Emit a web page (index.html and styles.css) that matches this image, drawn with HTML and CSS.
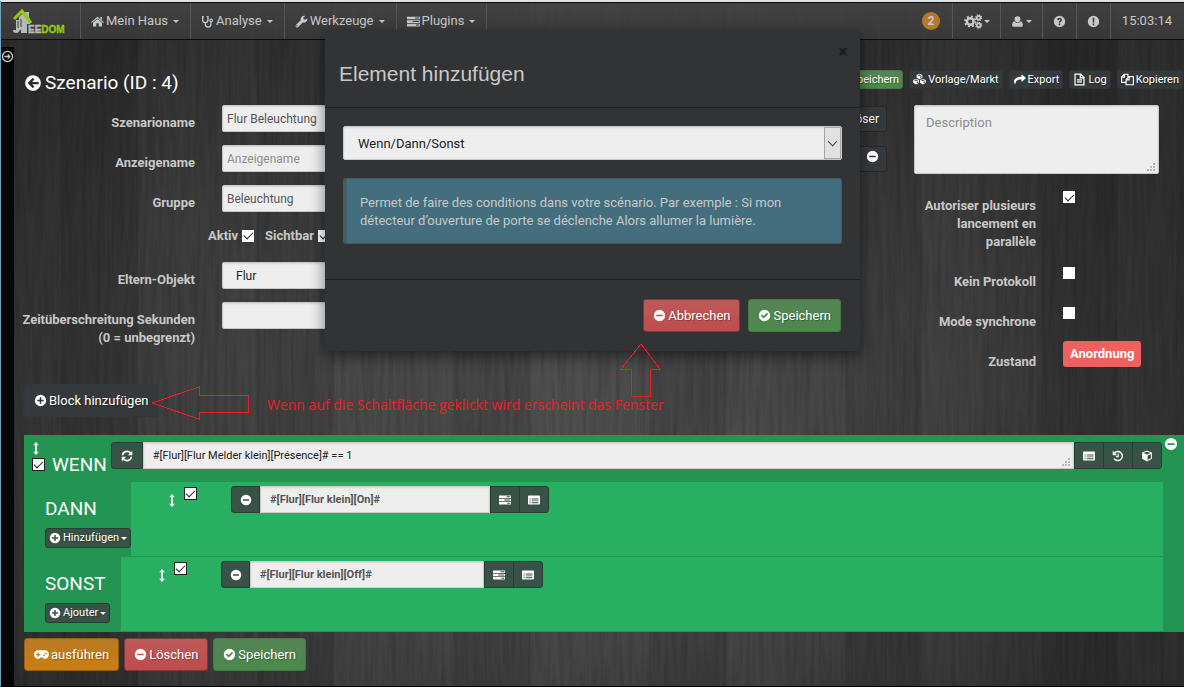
FILE: index.html
```html
<!DOCTYPE html>
<html lang="de">
<head>
<meta charset="utf-8">
<title>Szenario – Jeedom</title>
<link rel="stylesheet" href="styles.css">
</head>
<body>
<svg class="defs" width="0" height="0" aria-hidden="true">
  <symbol id="plus" viewBox="0 0 16 16"><path fill-rule="evenodd" d="M8 1a7 7 0 100 14A7 7 0 008 1zM7 4h2v3h3v2H9v3H7V9H4V7h3z"/></symbol>
  <symbol id="minus" viewBox="0 0 16 16"><path fill-rule="evenodd" d="M8 1a7 7 0 100 14A7 7 0 008 1zM4 7h8v2H4z"/></symbol>
  <symbol id="check" viewBox="0 0 16 16"><path fill-rule="evenodd" d="M8 1a7 7 0 100 14A7 7 0 008 1zM3.500 8.200L5 6.700l2 2 4-4 1.500 1.500L7 11.700z"/></symbol>
  <symbol id="back" viewBox="0 0 16 16"><path fill-rule="evenodd" d="M8 1a7 7 0 100 14A7 7 0 008 1zM3.200 8l4.600-4.600 1.400 1.400L7.200 7H13v2H7.200l2 2.200-1.400 1.400z"/></symbol>
  <symbol id="forward" viewBox="0 0 16 16"><circle cx="8" cy="8" r="6.200" fill="none" stroke="currentColor" stroke-width="1.600"/><path d="M8.300 4.300L12 8l-3.700 3.700V9H4V7h4.300z"/></symbol>
  <symbol id="home" viewBox="0 0 16 16"><path d="M8 2l8 6.800-.9 1L8 3.900.9 9.800 0 8.800zM11.500 2.500h2v3.600l-2-1.700zM8 5l5.500 4.600V14h-4v-4h-3v4h-4V9.600z"/></symbol>
  <symbol id="steth" viewBox="0 0 16 16"><path fill="none" stroke="currentColor" stroke-width="1.600" d="M3.500 2H2v4a3.300 3.300 0 006.600 0V2H7M5.300 9.500v2a3.400 3.400 0 006.900 0V8"/><circle cx="12.500" cy="6.500" r="1.600" fill="none" stroke="currentColor" stroke-width="1.400"/></symbol>
  <symbol id="wrench" viewBox="0 0 16 16"><path fill-rule="evenodd" d="M15.300 4.300a4.400 4.400 0 01-5.800 4.800L3.700 15c-1.400 1.300-3.900-1-2.600-2.600l6-5.800A4.400 4.400 0 0113 1.200l-2.700 2 .2 2 2 .7zM2.700 12.600a.8.8 0 100 1.500.8.8 0 000-1.500z"/></symbol>
  <symbol id="tasks" viewBox="0 0 16 16"><path fill-rule="evenodd" d="M0 2h16v3.300H0zM10 3h5v1.200h-5zM0 6.400h16v3.300H0zM7 7.400h8v1.200H7zM0 10.800h16V14H0zM11 11.800h4V13h-4z"/></symbol>
  <symbol id="list" viewBox="0 0 16 16"><path fill-rule="evenodd" d="M1 2h14q1 0 1 1v10q0 1-1 1H1q-1 0-1-1V3q0-1 1-1zM2 6h1.500v1.300H2zM5 6h9v1.300H5zM2 8.500h1.500v1.300H2zM5 8.500h9v1.300H5zM2 11h1.500v1.300H2zM5 11h9v1.300H5z"/></symbol>
  <symbol id="cogs" viewBox="0 0 20 16"><circle cx="6.500" cy="8" r="3.500" fill="none" stroke="currentColor" stroke-width="2.600"/><circle cx="6.500" cy="8" r="5.500" fill="none" stroke="currentColor" stroke-width="2" stroke-dasharray="2.100 2.220"/><circle cx="15.500" cy="4" r="2" fill="none" stroke="currentColor" stroke-width="1.800"/><circle cx="15.500" cy="4" r="3.200" fill="none" stroke="currentColor" stroke-width="1.200" stroke-dasharray="1.300 1.210"/><circle cx="15.500" cy="12" r="2" fill="none" stroke="currentColor" stroke-width="1.800"/><circle cx="15.500" cy="12" r="3.200" fill="none" stroke="currentColor" stroke-width="1.200" stroke-dasharray="1.300 1.210"/></symbol>
  <symbol id="user" viewBox="0 0 16 16"><path d="M8 1.500a3.600 3.600 0 013.600 3.700C11.600 7.500 10 9.200 8 9.200S4.400 7.500 4.400 5.200A3.600 3.600 0 018 1.500zM4.300 7.700C5.500 10.700 10.500 10.700 11.700 7.700c2.300.5 2.900 3 2.900 5 0 1.300-.8 1.800-1.800 1.800H3.200c-1 0-1.800-.5-1.800-1.800 0-2 .6-4.500 2.900-5z"/></symbol>
  <symbol id="question" viewBox="0 0 16 16"><path fill-rule="evenodd" d="M8 1a7 7 0 100 14A7 7 0 008 1zM7 10.500h2v2H7zM5 6C5.200 2.600 11 2.600 11 6c0 1.900-2 1.900-2 3.500H7C7 7.200 9 7.300 9 6c0-1-1.700-1-2 .5z"/></symbol>
  <symbol id="bang" viewBox="0 0 16 16"><path fill-rule="evenodd" d="M8 1a7 7 0 100 14A7 7 0 008 1zM6.900 3.500h2.200L8.900 9.300H7.100zM7 10.500h2v2H7z"/></symbol>
  <symbol id="cubes" viewBox="0 0 18 16"><path fill-rule="evenodd" d="M9 0l4 1.600v4L9 7.500 5 5.600v-4zM6.200 2L9 3.100 11.800 2 9 1zM9.800 4.200V6l2.200-1V3.300zM4.300 7l4 1.600v4L4.300 15l-4-2.400v-4zM1.500 9l2.800 1.200L7.100 9 4.300 8zM5 11.300v2l2.300-1.200v-1.800zM13.700 7l4 1.600v4l-4 2.400-4-2.400v-4zM10.900 9l2.800 1.200L16.500 9l-2.800-1zM14.500 11.300v2l2.200-1.200v-1.800z"/></symbol>
  <symbol id="cube" viewBox="0 0 16 16"><path fill-rule="evenodd" d="M8 .8l6.500 2.600v8.400L8 15.200l-6.500-3.400V3.400zM3.300 4L8 5.900 12.700 4 8 2.200zM8.800 7.300v6l4.400-2.300V5.500z"/></symbol>
  <symbol id="share" viewBox="0 0 16 16"><path d="M16 6.300L10.500 11V8C6 7.800 3.200 9 2.800 14 .2 11 -.2 4.800 10.500 4.600v-3z"/></symbol>
  <symbol id="file" viewBox="0 0 16 16"><path fill="none" stroke="currentColor" stroke-width="1.500" d="M2.500 1.500h7l4 4v9h-11zM9 1.500V6h4.500M5 8.500h6M5 11h6"/></symbol>
  <symbol id="copy" viewBox="0 0 16 16"><path fill="none" stroke="currentColor" stroke-width="1.400" d="M6 11.500H.8V5L4 1.500h4.500v3M4.300 1.500V5H.8M6.300 8.200L9.500 4.500h5.700v10H6.300zM10 4.500v4H6.300"/></symbol>
  <symbol id="refresh" viewBox="0 0 16 16"><path fill="none" stroke="currentColor" stroke-width="2.200" d="M2 7a6 6 0 0110.500-3M14 9a6 6 0 01-10.500 3"/><path d="M15 1v6H9zM1 15V9h6z"/></symbol>
  <symbol id="history" viewBox="0 0 16 16"><path fill="none" stroke="currentColor" stroke-width="2" d="M3 4.500A6 6 0 112.800 11.500"/><path d="M1 1v6h6zM7.500 4.500H9v5H5.500V8h2z"/></symbol>
  <symbol id="updown" viewBox="0 0 8 16"><path d="M4 0l3.500 4H5v8h2.500L4 16 .5 12H3V4H.5z"/></symbol>
  <symbol id="gamepad" viewBox="0 0 18 14"><path fill-rule="evenodd" d="M5 2h8a5 5 0 010 10c-1.700 0-2.700-.9-3.200-1.800H8.200C7.700 11.100 6.700 12 5 12A5 5 0 015 2zM4.300 4.500v1.800H2.500v1.500h1.800v1.800h1.500V7.800h1.800V6.300H5.800V4.500zM12 7a1.100 1.100 0 100 2.200A1.100 1.100 0 0012 7zM14.300 4.600a1.100 1.100 0 100 2.200 1.100 1.100 0 000-2.200z"/></symbol>
  <symbol id="grip" viewBox="0 0 9 9"><path d="M6 0h2v2H6zM3 3h2v2H3zM6 3h2v2H6zM0 6h2v2H0zM3 6h2v2H3zM6 6h2v2H6z"/></symbol>
</svg>

<svg class="wood" aria-hidden="true">
  <filter id="grain" x="0" y="0" width="100%" height="100%">
    <feTurbulence type="fractalNoise" baseFrequency="0.22 0.012" numOctaves="4" seed="8"/>
    <feColorMatrix values="0 0 0 0 0  0 0 0 0 0  0 0 0 0 0  1.4 0 0 0 -0.5"/>
  </filter>
  <rect width="100%" height="100%" filter="url(#grain)"/>
</svg>

<nav class="navbar">
  <a class="brand" href="#" aria-label="Jeedom">
    <svg width="56" height="28" viewBox="0 0 56 28"><path fill="#b9b9b9" d="M13 3h3v5l1 2v5h-3v9H8v-3H6V8l4-4zM3 11h4v8q0 5-4 5-3 0-3-3h3z"/><path fill="none" stroke="#3a3a3a" stroke-width="1" d="M5 12v7M8 10v8"/><path fill="none" stroke="#93c90f" stroke-width="3" d="M1 10l8-8 9 12"/><text x="15" y="24" font-family="Liberation Sans, sans-serif" font-size="10" font-weight="700" fill="#b9b9b9" stroke="#b9b9b9" stroke-width=".4">EE<tspan fill="#93c90f" stroke="#93c90f">DOM</tspan></text></svg>
  </a>
  <a class="item" href="#"><svg class="i"><use href="#home"/></svg>Mein Haus<b class="caret"></b></a>
  <a class="item" href="#"><svg class="i"><use href="#steth"/></svg>Analyse<b class="caret"></b></a>
  <a class="item" href="#"><svg class="i"><use href="#wrench"/></svg>Werkzeuge<b class="caret"></b></a>
  <a class="item" href="#"><svg class="i"><use href="#tasks"/></svg>Plugins<b class="caret"></b></a>
  <span class="spacer"></span>
  <a class="item count" href="#"><span>2</span></a>
  <a class="item" href="#" aria-label="Einstellungen"><svg class="i wide"><use href="#cogs"/></svg><b class="caret tight"></b></a>
  <a class="item" href="#" aria-label="Benutzer"><svg class="i"><use href="#user"/></svg><b class="caret tight"></b></a>
  <a class="item" href="#" aria-label="Hilfe"><svg class="i only"><use href="#question"/></svg></a>
  <a class="item" href="#" aria-label="Info"><svg class="i only"><use href="#bang"/></svg></a>
  <span class="item clock">15:03:14</span>
</nav>

<div class="page">
  <aside class="rail"><svg class="i"><use href="#forward"/></svg></aside>
  <main class="main">
    <header class="head">
      <h1><svg class="i big"><use href="#back"/></svg>Szenario (ID : 4)</h1>
      <div class="tools">
        <button class="xs success"><svg class="i"><use href="#check"/></svg>Speichern</button>
        <button class="xs"><svg class="i"><use href="#cubes"/></svg>Vorlage/Markt</button>
        <button class="xs"><svg class="i"><use href="#share"/></svg>Export</button>
        <button class="xs"><svg class="i"><use href="#file"/></svg>Log</button>
        <button class="xs"><svg class="i"><use href="#copy"/></svg>Kopieren</button>
      </div>
    </header>

    <form class="form">
      <div class="col">
        <div class="row"><label for="sn">Szenarioname</label><input class="ctl" id="sn" value="Flur Beleuchtung"></div>
        <div class="row"><label for="an">Anzeigename</label><input class="ctl" id="an" placeholder="Anzeigename"></div>
        <div class="row"><label for="gr">Gruppe</label><input class="ctl" id="gr" value="Beleuchtung"></div>
        <div class="row checks"><label>Aktiv<input type="checkbox" checked></label><label>Sichtbar<input type="checkbox" checked></label></div>
        <div class="row"><label for="eo">Eltern-Objekt</label><select class="ctl" id="eo"><option>Flur</option></select></div>
        <div class="row"><label for="zs" class="long">Zeitüberschreitung Sekunden<br>(0 = unbegrenzt)</label><input class="ctl" id="zs"></div>
      </div>
      <div class="col mid">
        <button type="button" class="sm">+ Auslöser</button>
        <button type="button" class="sm" aria-label="Entfernen"><svg class="i"><use href="#minus"/></svg></button>
      </div>
      <div class="col">
        <div class="area"><textarea class="ctl tall" placeholder="Description" aria-label="Description"></textarea><svg class="grip"><use href="#grip"/></svg></div>
        <div class="row opt"><label for="c1">Autoriser plusieurs lancement en parallèle</label><input type="checkbox" id="c1" checked></div>
        <div class="row opt"><label for="c2">Kein Protokoll</label><input type="checkbox" id="c2"></div>
        <div class="row opt"><label for="c3">Mode synchrone</label><input type="checkbox" id="c3"></div>
        <div class="row opt"><span class="lbl">Zustand</span><span class="state">Anordnung</span></div>
      </div>
    </form>

    <button class="btn add"><svg class="i"><use href="#plus"/></svg>Block hinzufügen</button>

    <section class="block">
      <div class="if">
        <div class="handle"><svg class="ud"><use href="#updown"/></svg><input type="checkbox" class="lined" checked aria-label="Wenn aktiv"></div>
        <h2>WENN</h2>
        <div class="group">
          <button class="add-on" aria-label="Aktualisieren"><svg class="i"><use href="#refresh"/></svg></button>
          <div class="area"><textarea class="ctl expr" rows="1" aria-label="Bedingung">#[Flur][Flur Melder klein][Présence]# == 1</textarea><svg class="grip"><use href="#grip"/></svg></div>
          <button class="add-on" aria-label="Befehl"><svg class="i"><use href="#list"/></svg></button>
          <button class="add-on" aria-label="Verlauf"><svg class="i"><use href="#history"/></svg></button>
          <button class="add-on" aria-label="Objekt"><svg class="i"><use href="#cube"/></svg></button>
        </div>
        <button class="remove" aria-label="Block entfernen"><svg class="i"><use href="#minus"/></svg></button>
      </div>
      <div class="branch">
        <div class="side"><h2>DANN</h2><button class="xs"><svg class="i"><use href="#plus"/></svg>Hinzufügen<b class="caret"></b></button></div>
        <div class="body">
          <svg class="ud"><use href="#updown"/></svg><input type="checkbox" class="lined" checked aria-label="Aktion aktiv">
          <div class="group">
            <button class="add-on" aria-label="Entfernen"><svg class="i"><use href="#minus"/></svg></button>
            <input class="ctl cmd" value="#[Flur][Flur klein][On]#" aria-label="Befehl">
            <button class="add-on" aria-label="Aktion"><svg class="i"><use href="#tasks"/></svg></button>
            <button class="add-on" aria-label="Liste"><svg class="i"><use href="#list"/></svg></button>
          </div>
        </div>
      </div>
      <div class="branch">
        <div class="side"><h2>SONST</h2><button class="xs"><svg class="i"><use href="#plus"/></svg>Ajouter<b class="caret"></b></button></div>
        <div class="body">
          <svg class="ud"><use href="#updown"/></svg><input type="checkbox" class="lined" checked aria-label="Aktion aktiv">
          <div class="group">
            <button class="add-on" aria-label="Entfernen"><svg class="i"><use href="#minus"/></svg></button>
            <input class="ctl cmd" value="#[Flur][Flur klein][Off]#" aria-label="Befehl">
            <button class="add-on" aria-label="Aktion"><svg class="i"><use href="#tasks"/></svg></button>
            <button class="add-on" aria-label="Liste"><svg class="i"><use href="#list"/></svg></button>
          </div>
        </div>
      </div>
    </section>

    <div class="actions">
      <button class="btn warn"><svg class="i pad"><use href="#gamepad"/></svg>ausführen</button>
      <button class="btn danger"><svg class="i"><use href="#minus"/></svg>Löschen</button>
      <button class="btn success"><svg class="i"><use href="#check"/></svg>Speichern</button>
    </div>
  </main>
</div>

<div class="modal" role="dialog" aria-labelledby="mt">
  <div class="modal-head"><h3 id="mt">Element hinzufügen</h3><button class="close" aria-label="Schließen">×</button></div>
  <div class="modal-body">
    <div class="pick"><select class="ctl" aria-label="Element"><option>Wenn/Dann/Sonst</option></select><span class="drop"></span></div>
    <p class="info">Permet de faire des conditions dans votre scénario. Par exemple : Si mon détecteur d’ouverture de porte se déclenche Alors allumer la lumière.</p>
  </div>
  <div class="modal-foot">
    <button class="btn danger"><svg class="i"><use href="#minus"/></svg>Abbrechen</button>
    <button class="btn success"><svg class="i"><use href="#check"/></svg>Speichern</button>
  </div>
</div>

<svg class="note-arrow left" viewBox="0 0 99 34"><path d="M1 17L48 1v8h49v17H48v7z"/></svg>
<svg class="note-arrow up" viewBox="0 0 42 54"><path d="M21 1l19 25H30v27H11V26H1z"/></svg>
<p class="note">Wenn auf die Schaltfläche geklickt wird erscheint das Fenster</p>
</body>
</html>
```

FILE: styles.css
```css
* { box-sizing: border-box; }

body {
  margin: 0;
  min-height: 100vh;
  display: flex;
  flex-direction: column;
  position: relative;
  overflow: hidden;
  border-top: 2px solid #dfe3e6;
  border-left: 1px solid #6fa3bf;
  border-bottom: 1px solid #000;
  background:
    repeating-linear-gradient(90deg, rgba(255,255,255,.01) 0 61px, rgba(0,0,0,.05) 61px 138px, rgba(255,255,255,.02) 138px 196px),
    radial-gradient(ellipse 55% 75% at 48% 60%, #4c4c4c, #434343 45%, #2b2b2b);
  background-color: #2b2b2b;
  color: #c8c8c8;
  font: 13px/18px Roboto, sans-serif;
}

.defs { position: absolute; }
.wood { position: absolute; top: 0; left: 0; width: 100%; height: 100%; z-index: -1; opacity: .2; }

h1, h2, h3, p { margin: 0; font-weight: 400; }
button, input, select, textarea { font: inherit; color: inherit; margin: 0; }
button { cursor: pointer; }

.i { width: 13px; height: 13px; flex: none; fill: currentColor; }
.caret { border: 3px solid transparent; border-top-color: currentColor; border-bottom: 0; margin-left: 1px; }

/* Navigation */
.navbar {
  display: flex;
  height: 38px;
  border-top: 1px solid #0c0c0c;
  border-bottom: 1px solid #0c0c0c;
  background: linear-gradient(rgba(72,72,72,.75), rgba(60,60,60,.75));
  font-size: 13px;
}
.brand { width: 79px; padding: 6px 12px; }
.item {
  display: flex;
  align-items: center;
  padding: 0 10px;
  border-left: 1px solid #575757;
  color: #c8c8c8;
  text-decoration: none;
}
.item .i { margin-right: 2px; }
.item .wide { width: 21px; height: 15px; margin: 0; }
.item .only { margin: 0; }
.item .caret { margin: 0 1px 0 5px; }
.item .caret.tight { margin: 0; }
.spacer { flex: 1; border-left: 1px solid #575757; }
.count { border: 0; padding-right: 12px; }
.count span { min-width: 18px; border-radius: 9px; background: #b5792b; font-size: 12px; font-weight: 700; text-align: center; }
.clock { padding: 0 12px 0 11px; }

/* Page frame */
.page { display: flex; flex: 1; }
.rail { width: 13px; margin-top: 7px; padding-top: 3px; background: #060606; }
.rail .i { display: block; }
.main { flex: 1; min-width: 0; padding-left: 10px; }

.head { display: flex; align-items: center; justify-content: space-between; height: 65px; padding: 20px 1px 0 0; }
h1 { display: flex; align-items: center; gap: 3px; color: #fff; font-size: 19px; line-height: 24px; }
.i.big { width: 18px; height: 18px; }
.tools { display: flex; gap: 6px; align-self: flex-start; padding-top: 10px; }

/* Buttons */
button { border: 1px solid rgba(0,0,0,.3); border-radius: 3px; background: #36393b; color: #fff; text-shadow: 1px 1px 1px rgba(0,0,0,.3); }
.xs { display: flex; align-items: center; gap: 2px; height: 19px; padding: 0 3px; border-color: #313436; font-size: 11px; line-height: 16px; white-space: nowrap; }
.xs .caret { margin-left: 0; }
.side .xs .i { width: 12px; height: 12px; }
.btn { display: inline-flex; align-items: center; gap: 2px; height: 33px; padding: 0 9px; border-color: #343738; font-size: 13px; white-space: nowrap; }
.sm { height: 26px; padding: 0 7px; font-size: 12px; }
.success { background: linear-gradient(#558355, #4a8a4a); border-color: #427a42; }
.danger { background: linear-gradient(#bd5a5a, #bf4c4a); border-color: #7b3a39; }
.warn { background: linear-gradient(#b97926, #cb7d12); border-color: #94600f; }
.i.pad { width: 15px; }

/* Controls */
.ctl {
  width: 100%;
  height: 27px;
  padding: 0 4px;
  border: 1px solid #c9c9c9;
  border-radius: 2px;
  background: #eee;
  box-shadow: inset 0 1px 2px rgba(0,0,0,.1);
  color: #555;
  font-size: 12px;
  appearance: none;
}
.ctl::placeholder { color: #8d8d8d; opacity: 1; }
select.ctl { color: #222; padding-left: 13px; }
textarea.ctl { display: block; resize: none; overflow: hidden; }
.area { position: relative; }
.grip { position: absolute; right: 3px; bottom: 2px; width: 9px; height: 9px; fill: #b8b8b8; }

input[type=checkbox] {
  appearance: none;
  display: grid;
  place-items: center;
  flex: none;
  width: 12px;
  height: 12px;
  background: #fff;
}
input[type=checkbox]:checked::before {
  content: "";
  width: 8px;
  height: 4px;
  margin-top: -2px;
  border: solid #222;
  border-width: 0 0 1px 1px;
  transform: rotate(-45deg);
}
input.lined { width: 13px; height: 13px; border: 1px solid #222; }

/* Scenario settings */
.form { display: grid; grid-template-columns: 31% 1fr 270px; }
.col { min-width: 0; }
.row { display: grid; grid-template-columns: 171px 1fr; gap: 27px; margin-bottom: 13px; }
.row label, .lbl { padding-top: 9px; color: #c8c8c8; font-weight: 700; text-align: right; }
.row .long { justify-self: end; white-space: nowrap; }
.row.checks { display: flex; align-items: center; gap: 11px; padding-left: 184px; margin: 0 0 16px; height: 21px; }
.row.checks label { display: flex; align-items: center; gap: 4px; padding: 0; }
.mid { display: flex; flex-direction: column; align-items: flex-end; gap: 14px; padding: 1px 27px 0 0; }
.tall { height: 69px; padding: 8px 11px; font-size: 13px; }
.form .area { width: 245px; margin-bottom: 14px; }
.row.opt { grid-template-columns: 122px 1fr; margin-bottom: 13px; }
.row.opt input { margin-top: 3px; }
.opt .state { justify-self: start; align-self: start; margin-top: -3px; }
.state { padding: 4px 7px; border-radius: 3px; background: #f0605e; color: #fff; font-weight: 700; }
.add { display: flex; }

/* Condition block */
.block { margin-top: 18px; background: #249453; }
.if { position: relative; display: flex; height: 47px; padding: 7px 22px 0 8px; }
.handle { width: 20px; }
.ud { width: 8px; height: 13px; flex: none; fill: #fff; }
.handle .ud { display: block; }
.handle .lined { margin-top: 3px; }
h2 { color: #fff; font-size: 19px; line-height: 24px; }
.if h2 { padding: 11px 4px 0 0; }
.group { display: flex; flex: 1; align-items: flex-start; }
.group .area { flex: 1; }
.group .ctl { border-radius: 0; border-color: #ccc; }
.expr { padding: 4px 9px; color: #222; font-size: 11px; }
.cmd { min-width: 0; padding: 0 9px; font-size: 11px; font-weight: 700; }
.add-on { display: grid; place-items: center; width: 30px; height: 27px; flex: none; margin-right: -1px; padding: 0; border: 1px solid #273f33; border-radius: 0; background: #395247; }
.add-on:first-child { width: 29px; border-radius: 3px 0 0 3px; margin: 0; }
.if .add-on:first-child { width: 32px; }
.add-on:last-child { border-radius: 0 3px 3px 0; margin: 0; }
.add-on .i { width: 12px; height: 12px; }
.remove { position: absolute; top: 2px; right: 6px; padding: 0; border: 0; background: none; }
.remove .i { display: block; width: 14px; height: 14px; }
.branch { display: flex; height: 75px; padding-right: 21px; }
.side { min-width: 97px; padding: 15px 0 0 21px; }
.side .xs { margin-top: 7px; height: 20px; background: #395247; border-color: #273f33; }
.body { display: flex; flex: 1; padding: 4px 0 0 37px; background: #29af61; border-bottom: 1px solid #249453; }
.body .ud { margin-top: 8px; }
.body .lined { margin: 1px 34px 0 8px; }
.body .group { flex: 0 0 32%; }

.actions { display: flex; gap: 5px; padding-top: 6px; }

/* Dialog */
.modal {
  position: absolute;
  top: 28px;
  left: 0;
  right: 0;
  width: 535px;
  margin: 0 auto;
  border-radius: 5px;
  background: #313335;
  box-shadow: 0 5px 15px rgba(0,0,0,.5);
}
.modal-head { position: relative; padding: 32px 14px 21px; border-bottom: 1px solid #1d1e1f; }
h3 { font: 21px/24px "Liberation Sans", sans-serif; }
.close { position: absolute; top: 12px; right: 13px; padding: 0; border: 0; background: none; color: #17191a; font-size: 16px; line-height: 20px; }
.modal-body { padding: 18px 18px 35px; }
.pick { position: relative; }
.pick .ctl { height: 34px; padding: 2px 0 0 14px; font-size: 13px; }
.drop { position: absolute; top: 1px; right: 1px; bottom: 1px; width: 17px; border: 1px solid #a5a5a5; background: #e1e1e1; pointer-events: none; display: grid; place-items: center; }
.drop::before { content: ""; width: 6px; height: 6px; margin-top: -4px; border: solid #444; border-width: 0 1px 1px 0; transform: rotate(45deg); }
.info { margin-top: 18px; padding: 15px 13px 13px; border: 1px solid #3a5f66; border-left: 4px solid #3f5f62; border-radius: 3px; background: #446e7d; }
.modal-foot { display: flex; justify-content: flex-end; gap: 8px; padding: 19px; border-top: 1px solid #1d1e1f; }

/* Annotations */
.note-arrow { position: absolute; fill: none; stroke: #ee1c24; stroke-width: 1; shape-rendering: crispEdges; }
.note-arrow.left { top: 384px; left: 150px; width: 99px; height: 34px; }
.note-arrow.up { top: 341px; left: 619px; width: 42px; height: 54px; }
.note { position: absolute; top: 393px; left: 266px; color: #ee1c24; font: 14px/20px "Open Sans", sans-serif; white-space: nowrap; }
```
